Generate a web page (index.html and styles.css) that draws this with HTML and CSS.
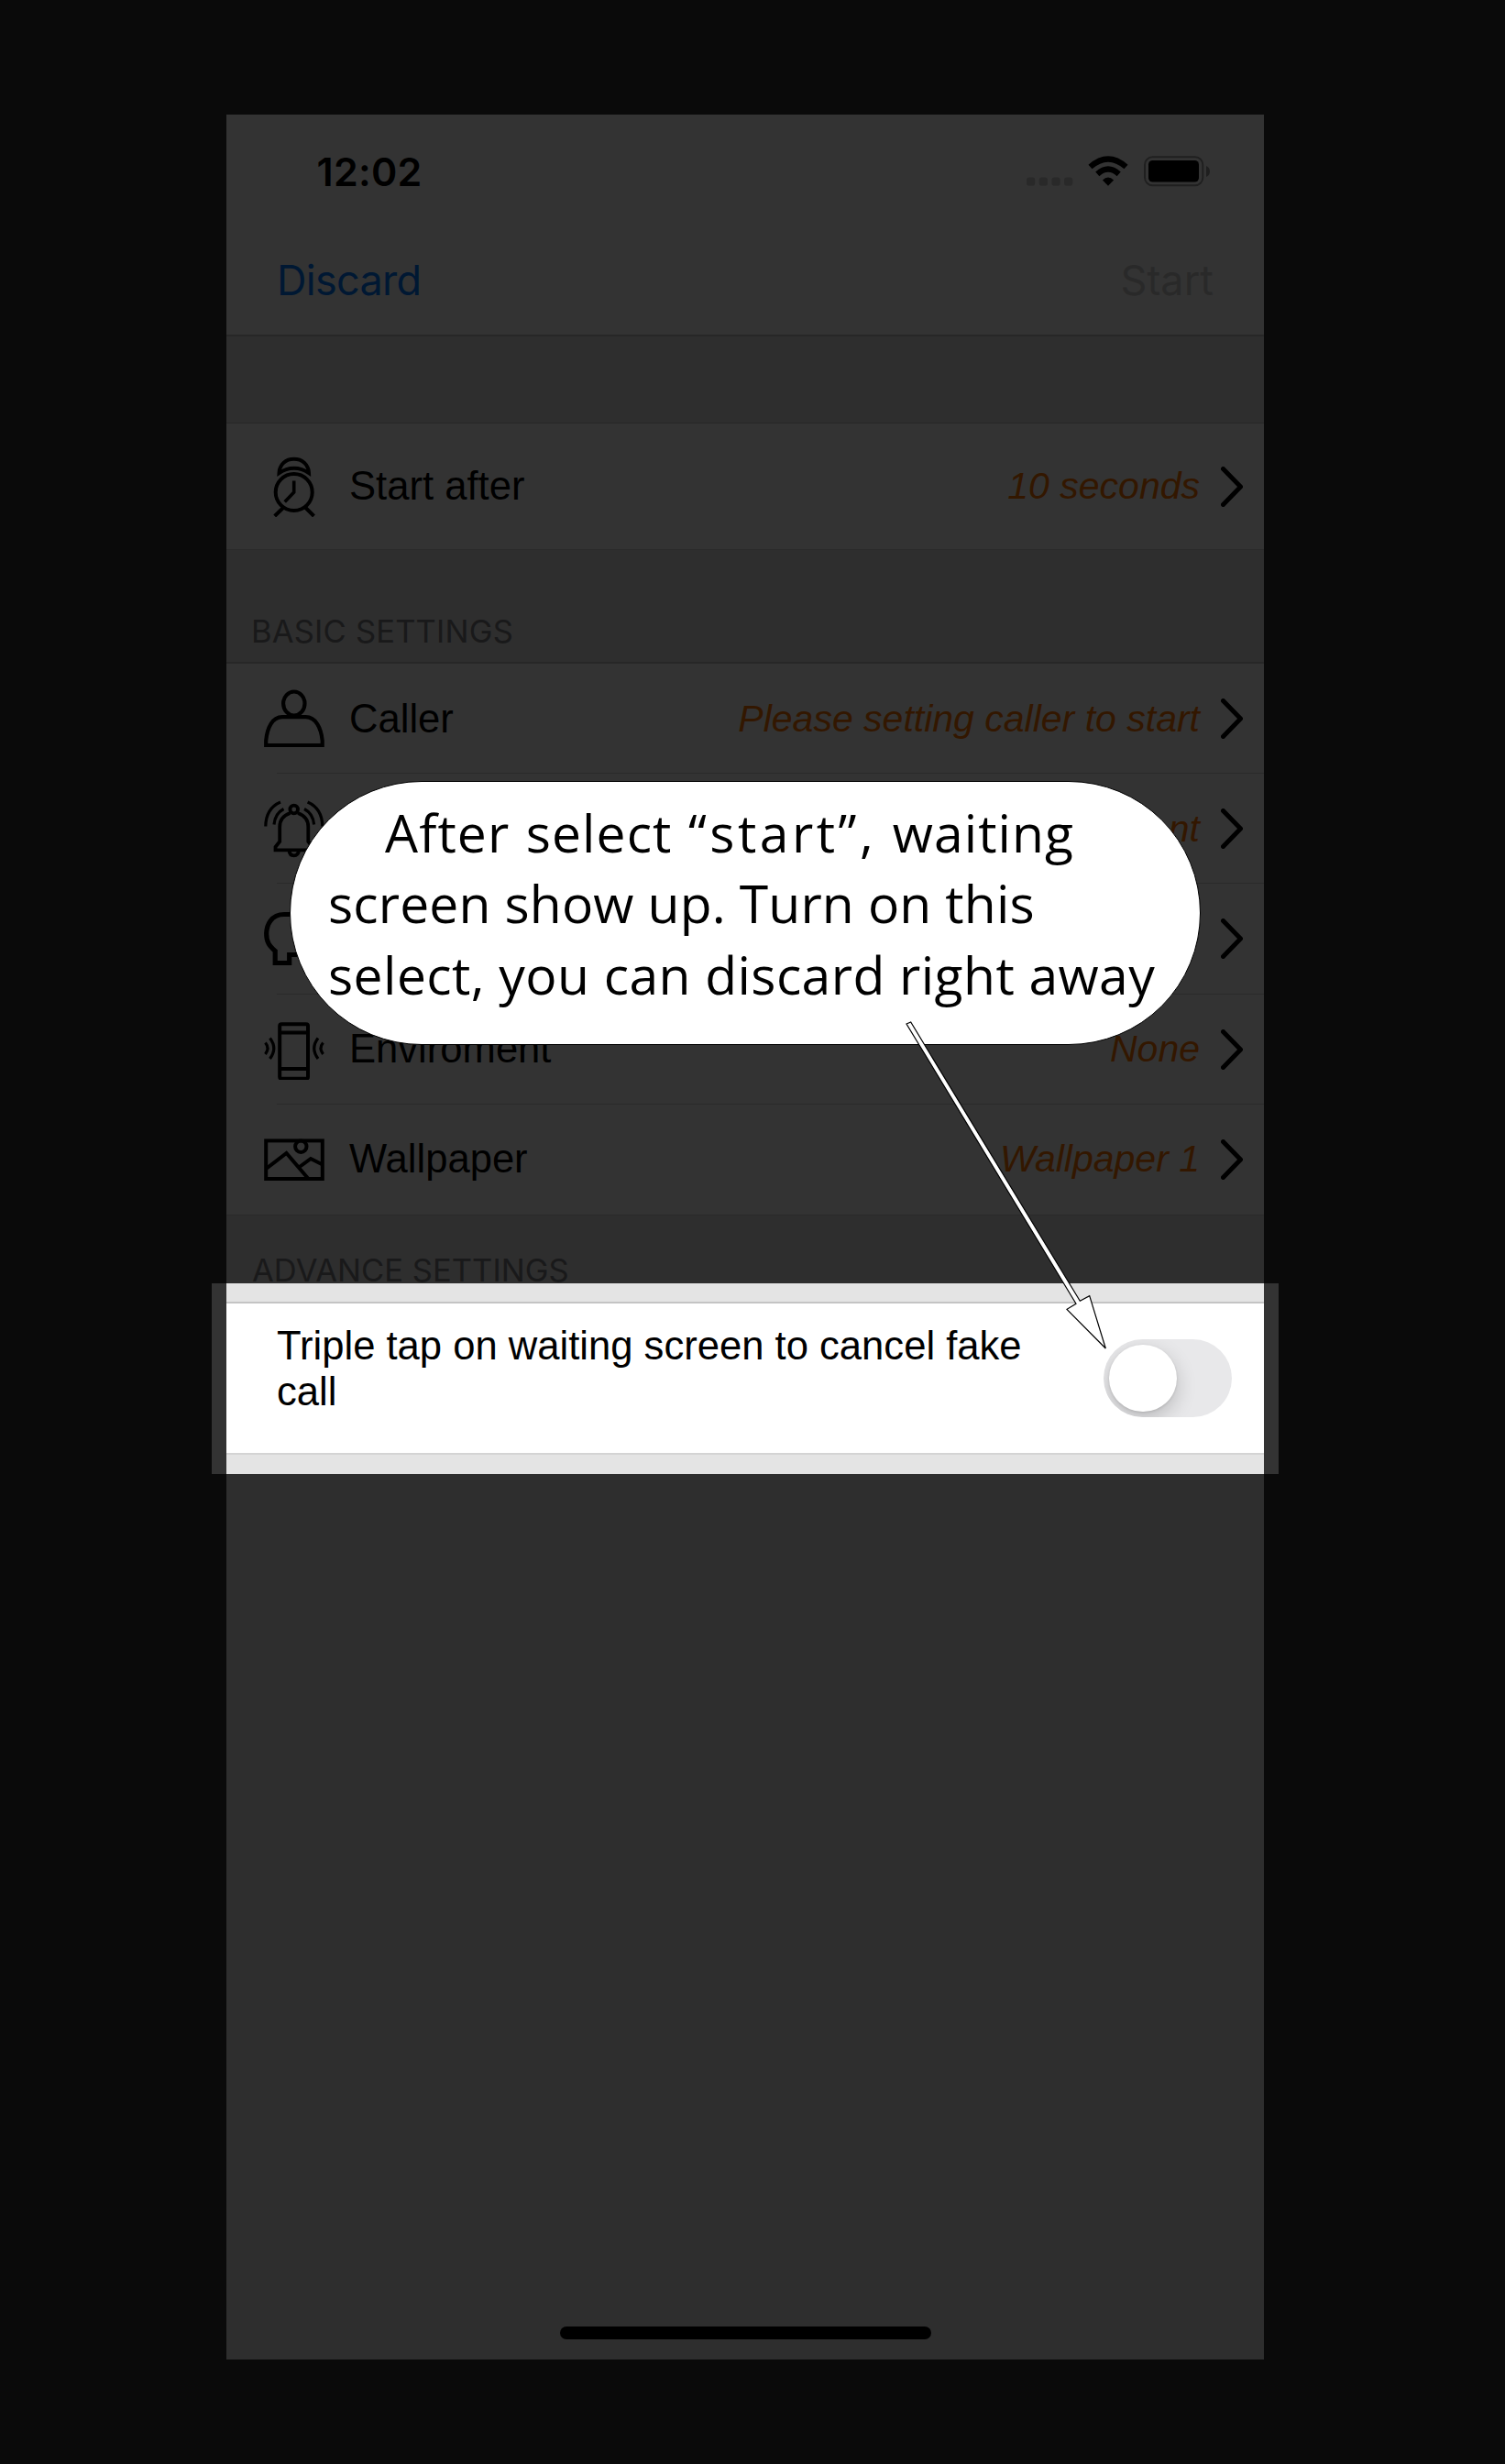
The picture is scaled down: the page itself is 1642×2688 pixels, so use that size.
FILE: index.html
```html
<!DOCTYPE html>
<html lang="en">
<head>
<meta charset="utf-8">
<title>Fake call settings</title>
<link rel="stylesheet" href="styles.css">
</head>
<body>
<main class="stage">
  <div class="phone">
    <header class="top">
      <div class="status">
        <span class="time">12:02</span>
        <svg class="status-icons" viewBox="0 0 200 34">
          <g fill="#cdcdcd"><rect x="0" y="23.5" width="9.3" height="9.3" rx="2.8"/><rect x="13.7" y="23.5" width="9.3" height="9.3" rx="2.8"/><rect x="27.4" y="23.5" width="9.3" height="9.3" rx="2.8"/><rect x="41" y="23.5" width="9.3" height="9.3" rx="2.8"/></g>
          <path d="M89 32.8L82.9 26.6Q89 20.6 95.1 26.6Z"/>
          <path d="M77.3 19.9Q89 9.2 100.7 19.9M69.5 12Q89 -5 108.5 12" fill="none" stroke="#000" stroke-width="6.2"/>
          <rect x="129" y="1.2" width="63.3" height="31" rx="8.5" fill="none" stroke="#9c9c9c" stroke-width="2"/>
          <rect x="133" y="5" width="55" height="23.5" rx="4.5"/>
          <path d="M196 11Q200 12.5 200 17T196 23Z" fill="#9c9c9c"/>
        </svg>
      </div>
      <div class="nav"><span class="discard">Discard</span><span class="start">Start</span></div>
    </header>

    <section class="group first">
      <div class="row tall">
        <svg class="icon" viewBox="0 0 66 66"><g fill="none" stroke="#000" stroke-width="4"><circle cx="32.7" cy="39" r="20"/><path d="M32.7 26.5V39L22.7 49.5" stroke-width="3.6"/><path d="M22 55L11.7 65M44.500 55L54.5 65"/><path d="M16.5 18C17 8 24 2.8 32.7 2.8S48.5 8 49 18C39 11 26.5 11 16.5 18Z"/></g></svg>
        <span class="label">Start after</span><span class="value">10 seconds</span>
        <svg class="chevron" viewBox="0 0 24 44"><path d="M2.5 2.5L21.5 22L2.5 41.5"/></svg>
      </div>
    </section>

    <h2 class="heading basic">BASIC SETTINGS</h2>
    <section class="group list">
      <div class="row">
        <svg class="icon" viewBox="0 0 66 66"><g fill="none" stroke="#000" stroke-width="4.2"><ellipse cx="32.8" cy="16.5" rx="11.7" ry="13"/><path d="M2.2 62V57C3.5 43 9 31.2 20 31.2H45.5C56.5 31.2 62.3 43 63.7 57V62Z"/></g></svg>
        <span class="label">Caller</span><span class="value">Please setting caller to start</span>
        <svg class="chevron" viewBox="0 0 24 44"><path d="M2.5 2.5L21.5 22L2.5 41.5"/></svg>
      </div>
      <div class="row">
        <svg class="icon" viewBox="0 0 66 66"><g fill="none" stroke="#000" stroke-width="3.8"><circle cx="32.7" cy="12" r="4.3"/><path d="M28.5 16Q17.2 20 17.2 31V47L12.5 53V56.3H53V53L48.3 47V31Q48.3 20 37 16M27.5 57Q28 62.3 32.7 62.3T38 57"/><path d="M1.8 30.5Q2 11 18 4M11 28.5Q12 16.5 21.5 11.5M63.8 30.5Q63.6 11 47.6 4M54.6 28.5Q53.6 16.5 44 11.5" stroke-width="3.2"/></g></svg>
        <span class="value">Silent</span>
        <svg class="chevron" viewBox="0 0 24 44"><path d="M2.5 2.5L21.5 22L2.5 41.5"/></svg>
      </div>
      <div class="row">
        <svg class="icon" viewBox="0 0 66 66"><path d="M38 6.5H22C8 6.5 2.7 18 2.7 28C2.7 37 6 41 12.2 46.500V59.5H27.7V50.5H38" fill="none" stroke="#000" stroke-width="5.2"/></svg>
        <svg class="chevron lone" viewBox="0 0 24 44"><path d="M2.5 2.5L21.5 22L2.5 41.5"/></svg>
      </div>
      <div class="row">
        <svg class="icon" viewBox="0 0 66 66"><g fill="none" stroke="#000" stroke-width="4"><rect x="17.2" y="5.2" width="30.8" height="59.5" rx="2"/><path d="M17 14.500H48M17 54H48"/><path d="M6.5 20.500Q15 31.5 6.500 43M1.500 25.5Q6.500 31.5 1.500 38M59 20.500Q50.500 31.500 59 43M64.500 25.500Q59.500 31.500 64.500 38" stroke-width="3.2"/></g></svg>
        <span class="label">Enviroment</span><span class="value">None</span>
        <svg class="chevron" viewBox="0 0 24 44"><path d="M2.5 2.5L21.5 22L2.5 41.5"/></svg>
      </div>
      <div class="row">
        <svg class="icon" viewBox="0 0 66 66"><g fill="none" stroke="#000" stroke-width="4"><rect x="2.2" y="12.4" width="61.6" height="41.600"/><circle cx="40.3" cy="18.8" r="6.200"/><path d="M3 42.5L24.5 26L48.5 54M38 41.5L51 32L64 38.5"/></g></svg>
        <span class="label">Wallpaper</span><span class="value">Wallpaper 1</span>
        <svg class="chevron" viewBox="0 0 24 44"><path d="M2.5 2.5L21.5 22L2.5 41.5"/></svg>
      </div>
    </section>

    <h2 class="heading advance">ADVANCE SETTINGS</h2>
    <section class="group option">
      <p class="option-text">Triple tap on waiting screen to cancel fake call</p>
      <span class="toggle"><span class="knob"></span></span>
    </section>
    <div class="home"></div>
  </div>

  <div class="spotlight"></div>
  <div class="bubble">
    <span class="line l1">After select <span class="quoted">“start”,</span> waiting</span>
    <span class="line l2">screen show up. Turn on this</span>
    <span class="line l3">select, you can discard right away</span>
  </div>
  <svg class="arrow" viewBox="980 1105 240 380"><path d="M989 1117L993.7 1115L1178.3 1419.3L1188.7 1413.6L1206.3 1471L1164 1428.3L1174 1422.3Z"/></svg>
</main>
</body>
</html>
```
FILE: styles.css
```css
* { box-sizing: border-box; }
body { margin: 0; background: #333; }
.stage {
  position: relative;
  width: 1642px;
  height: 2688px;
  padding: 125px 263px 114px 247px;
  overflow: hidden;
  font-family: "Liberation Sans", Arial, sans-serif;
}
.phone {
  display: flex;
  flex-direction: column;
  width: 1132px;
  height: 2449px;
  background: #e4e4e4;
}
.top {
  height: 242px;
  background: #fff;
  border-bottom: 2px solid #c4c4c4;
  font-family: Inter, sans-serif;
}
.status {
  display: flex;
  justify-content: space-between;
  align-items: center;
  height: 124px;
  padding: 0 59px 0 98.5px;
}
.time { font-size: 43px; font-weight: 600; letter-spacing: .25px; }
.status-icons { width: 200px; height: 34px; }
.nav {
  display: flex;
  justify-content: space-between;
  align-items: center;
  height: 112px;
  padding: 0 55px;
  font-size: 45px;
}
.discard { color: #007aff; letter-spacing: -.7px; }
.start { color: #cdcdcd; }
.group { background: #fff; }
.first {
  margin-top: 94px;
  border-top: 1px solid #c4c4c4;
  border-bottom: 1px solid #d4d4d4;
}
.row {
  position: relative;
  display: flex;
  align-items: center;
  height: 120.2px;
  padding: 0 23px 0 41px;
}
.row.tall { height: 137px; }
.list .row + .row::before {
  content: "";
  position: absolute;
  top: -1px;
  left: 55px;
  right: 0;
  height: 1px;
  background: #d2d2d2;
}
.icon { width: 66px; height: 66px; }
.label { margin-left: 27px; font-size: 43.6px; }
.value {
  margin-left: auto;
  font-size: 41px;
  font-style: italic;
  color: #ff7500;
}
.chevron { width: 24px; height: 44px; margin-left: 23px; }
.chevron.lone { margin-left: auto; }
.chevron path {
  fill: none;
  stroke: #000;
  stroke-width: 5;
  stroke-linecap: round;
  stroke-linejoin: round;
}
.heading {
  display: flex;
  align-items: flex-end;
  margin: 0;
  padding: 0 0 12.5px 27px;
  font: 400 34.5px/42px Inter, sans-serif;
  letter-spacing: .2px;
  color: #7c7c80;
}
.basic { height: 122px; }
.advance { height: 94px; padding-left: 28px; letter-spacing: .05px; }
.list { border-top: 2px solid #c4c4c4; border-bottom: 1px solid #d0d0d0; }
.option {
  display: flex;
  justify-content: space-between;
  height: 167px;
  padding: 21px 35px 0 55px;
  border-top: 2px solid #c4c4c4;
  border-bottom: 2px solid #d4d4d4;
}
.option-text {
  width: 840px;
  margin: 0;
  font-size: 43.6px;
  line-height: 50.3px;
}
.toggle {
  width: 140px;
  height: 85px;
  margin-top: 18px;
  padding: 6px;
  border-radius: 43px;
  background: #e8e8ea;
  overflow: hidden;
}
.knob {
  display: block;
  width: 73.5px;
  height: 73.5px;
  border-radius: 50%;
  background: #fff;
  box-shadow: 0 8px 22px rgba(0, 0, 0, .2), 0 1px 3px rgba(0, 0, 0, .12);
}
.home {
  width: 405px;
  height: 14px;
  margin: auto 0 22px 363.5px;
  border-radius: 7px;
  background: #000;
}
/* Dims everything outside the highlighted option */
.spotlight {
  position: absolute;
  left: 231px;
  top: 1400px;
  width: 1164px;
  height: 208px;
  box-shadow: 0 0 0 2800px rgba(0, 0, 0, .8);
}
.bubble {
  position: absolute;
  left: 316px;
  top: 852px;
  width: 994px;
  height: 288px;
  padding: 17px 0 0 41px;
  border: 1px solid #000;
  border-radius: 144px;
  background: #fff;
  font: 57px/77.3px "Open Sans", sans-serif;
}
.line { display: block; white-space: nowrap; }
.l1 { padding-left: 62px; letter-spacing: 1.1px; word-spacing: 1.5px; }
.quoted { letter-spacing: 3.5px; }
.l2 { letter-spacing: .14px; }
.l3 { letter-spacing: .44px; }
.arrow {
  position: absolute;
  left: 980px;
  top: 1105px;
  width: 240px;
  height: 380px;
}
.arrow path { fill: #fff; stroke: #000; stroke-width: 1.2; }
```
